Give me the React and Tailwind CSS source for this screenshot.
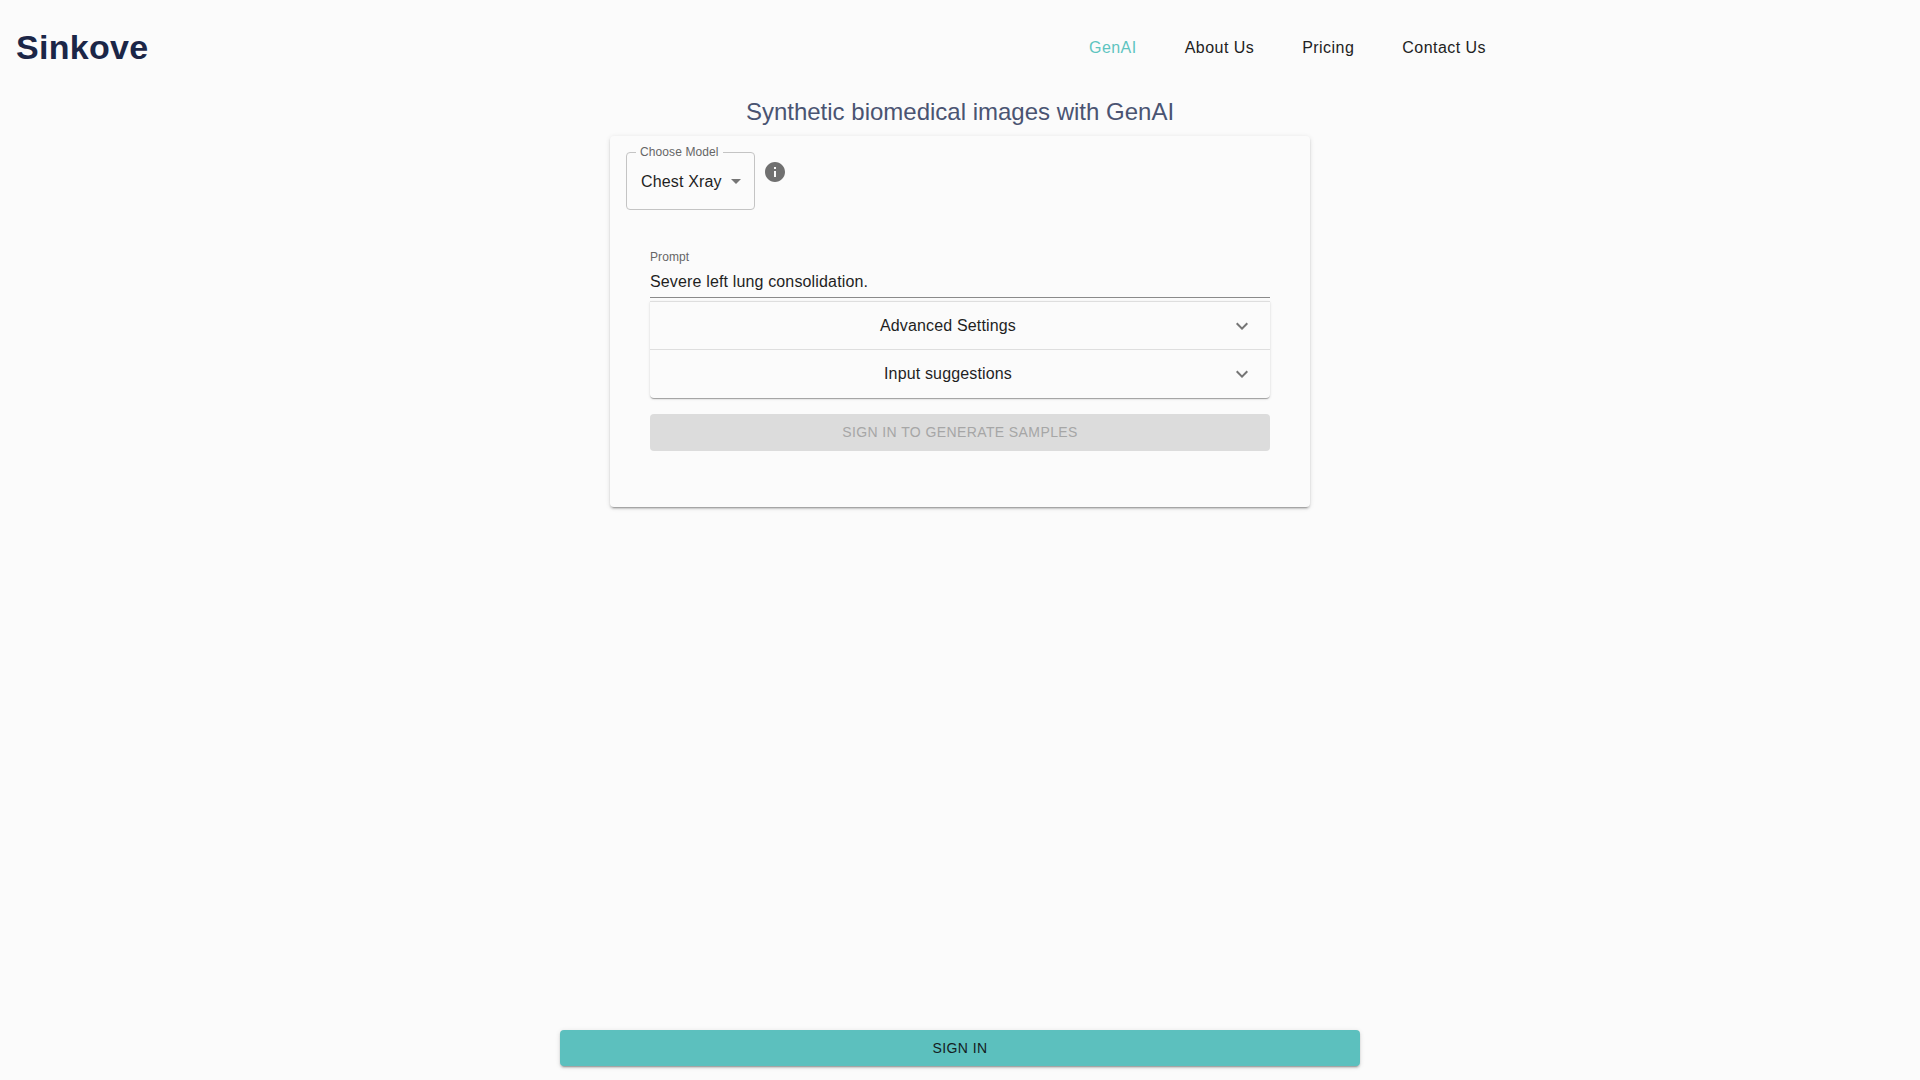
import React from "react";

const shadow = "shadow-[0px_2px_1px_-1px_rgba(0,0,0,0.2),0px_1px_1px_0px_rgba(0,0,0,0.14),0px_1px_3px_0px_rgba(0,0,0,0.12)]";
const shadowRaised = "shadow-[0px_3px_1px_-2px_rgba(0,0,0,0.2),0px_2px_2px_0px_rgba(0,0,0,0.14),0px_1px_5px_0px_rgba(0,0,0,0.12)]";

function Chevron() {
  return (
    <svg viewBox="0 0 24 24" className="w-6 h-6 fill-[#757575]">
      <path d="M16.59 8.59 12 13.17 7.41 8.59 6 10l6 6 6-6z" />
    </svg>
  );
}

function AccordionRow({ label, className }) {
  return (
    <div className={`flex items-center pl-4 pr-4 ${className}`}>
      <div className="flex-1 text-center text-base tracking-[0.15px] text-[#1f1f1f]">{label}</div>
      <Chevron />
    </div>
  );
}

export default function App() {
  return (
    <div className="h-screen flex flex-col bg-[#fbfbfb] font-['Liberation_Sans',Arial,sans-serif] overflow-hidden">
      <header className="h-[94px] flex items-center shrink-0">
        <div className="pl-4 w-[1089px] text-[34px] font-bold tracking-[0.3px] text-[#1b2647]">Sinkove</div>
        <nav className="flex gap-12 pt-[2px] text-base tracking-[0.46px] text-[#222222]">
          <span className="text-[#5ec4c0]">GenAI</span>
          <span>About Us</span>
          <span>Pricing</span>
          <span>Contact Us</span>
        </nav>
      </header>

      <h1 className="text-center text-2xl leading-9 font-normal text-[#4a5472] mb-[6px]">
        Synthetic biomedical images with GenAI
      </h1>

      <main className={`w-[700px] h-[371px] mx-auto rounded bg-[#fbfbfb] pt-4 px-4 ${shadowRaised}`}>
        <div className="flex items-start gap-2">
          <div className="relative w-[129px] h-[58px] rounded border border-[#c4c4c4] flex items-center pl-3.5 pt-[2px] gap-2">
            <span className="absolute left-[9px] top-[-7px] bg-[#fbfbfb] px-1 text-xs leading-3 tracking-[0.1px] text-[#666666]">Choose Model</span>
            <span className="text-base tracking-[0.15px] text-[#1f1f1f]">Chest Xray</span>
            <svg viewBox="0 0 24 24" className="w-6 h-6 fill-[#757575] absolute right-[6px] top-[16px]">
              <path d="M7 10l5 5 5-5z" />
            </svg>
          </div>
          <svg viewBox="0 0 24 24" className="w-6 h-6 fill-[#707070] mt-2">
            <path d="M12 2C6.48 2 2 6.48 2 12s4.48 10 10 10 10-4.48 10-10S17.52 2 12 2zm1 15h-2v-6h2v6zm0-8h-2V7h2v2z" />
          </svg>
        </div>

        <div className="w-[620px] ml-6 mt-10">
          <div className="text-xs leading-[14px] tracking-[0.1px] text-[#666666]">Prompt</div>
          <div className="h-[34px] pt-[8px] text-base leading-5 tracking-[0.15px] text-[#1f1f1f] border-b border-[#8a8a8a]">
            Severe left lung consolidation.
          </div>
          <div className={`mt-[3px] rounded-b ${shadow} border-t border-[#dedede]`}>
            <AccordionRow label="Advanced Settings" className="h-[47px]" />
            <AccordionRow label="Input suggestions" className="h-[49px] border-t border-[#dedede]" />
          </div>
          <div className="mt-4 h-[37px] pb-[1px] rounded bg-[#dcdcdc] flex items-center justify-center text-sm tracking-[0.4px] text-[#a6a6a6]">
            SIGN IN TO GENERATE SAMPLES
          </div>
        </div>
      </main>

      <div className="mt-auto mb-[14px] mx-auto w-[800px]">
        <div className={`h-9 rounded bg-[#5cc0be] flex items-center justify-center text-sm tracking-[0.4px] text-[#14201f] ${shadowRaised}`}>
          SIGN IN
        </div>
      </div>
    </div>
  );
}
